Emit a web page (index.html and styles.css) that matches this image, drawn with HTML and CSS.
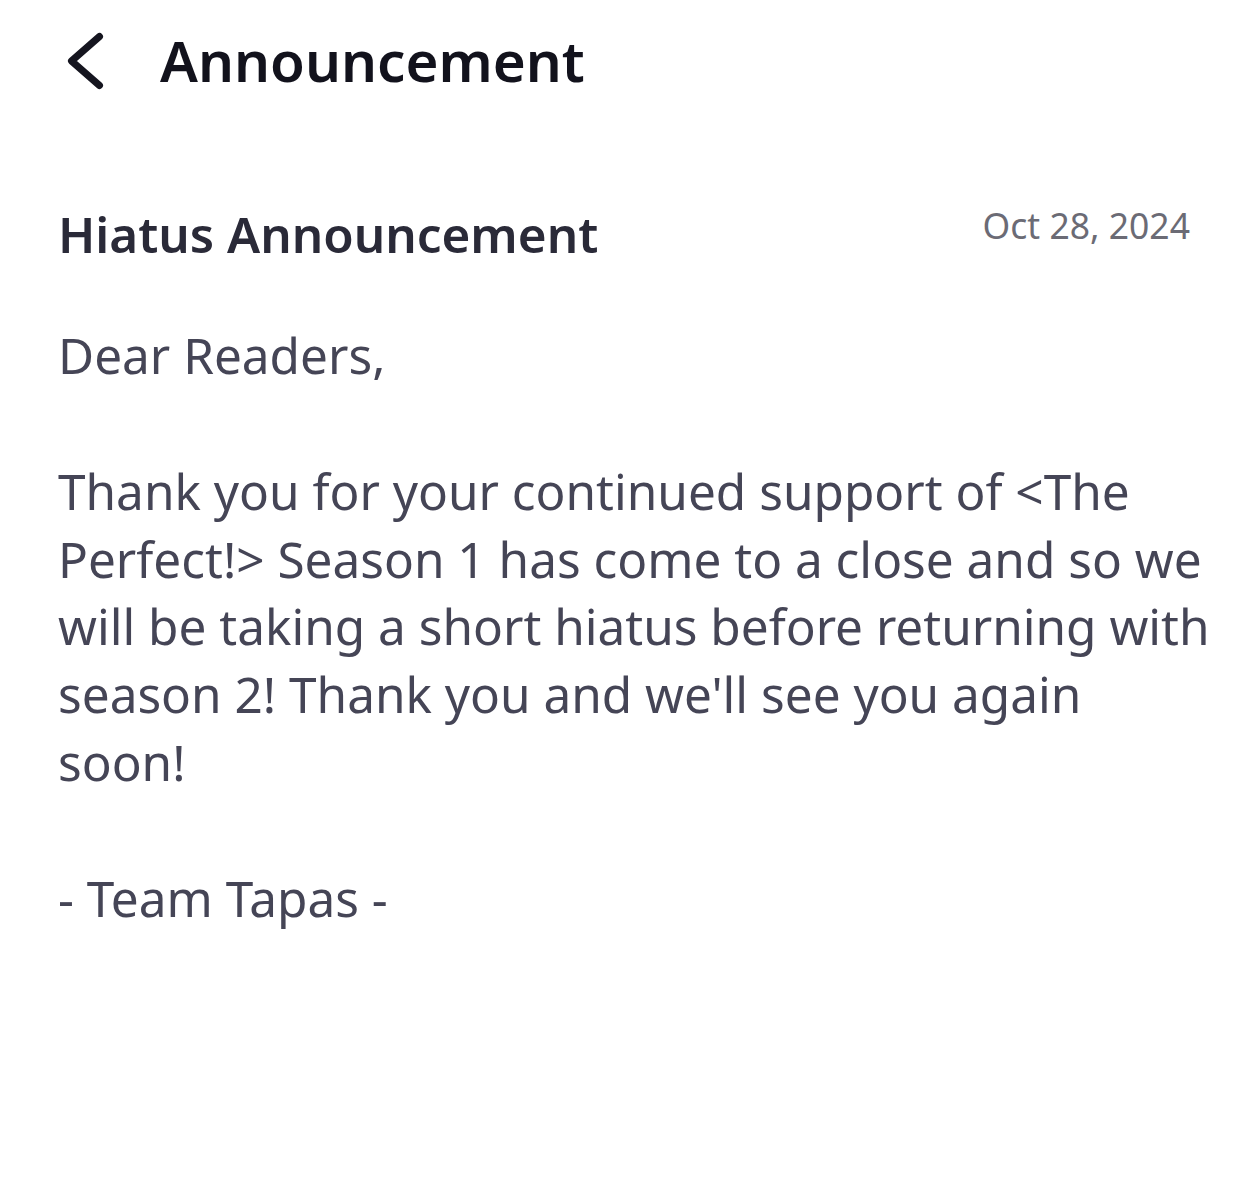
FILE: index.html
```html
<!DOCTYPE html>
<html lang="en">
<head>
<meta charset="utf-8">
<title>Announcement</title>
<link rel="stylesheet" href="styles.css">
</head>
<body>
<header class="topbar">
  <button class="back" aria-label="Back">
    <svg width="44" height="60" viewBox="0 0 44 60" aria-hidden="true">
      <path d="M35.5 5.5 L7.5 30 L35.5 54.5" fill="none" stroke="#15151f" stroke-width="7" stroke-linecap="round" stroke-linejoin="round"/>
    </svg>
  </button>
  <h1 class="topbar-title">Announcement</h1>
</header>
<main class="notice">
  <div class="notice-head">
    <h2 class="notice-title">Hiatus Announcement</h2>
    <span class="notice-date">Oct 28, 2024</span>
  </div>
  <div class="notice-body">
    <p>Dear Readers,</p>
    <p>&nbsp;</p>
    <p>Thank you for your continued support of &lt;The Perfect!&gt; Season 1 has come to a close and so we will be taking a short hiatus before returning with season 2! Thank you and we'll see you again soon!</p>
    <p>&nbsp;</p>
    <p>- Team Tapas -</p>
  </div>
</main>
</body>
</html>
```
FILE: styles.css
```css
* { box-sizing: border-box; }
html, body { margin: 0; padding: 0; background: #ffffff; }
body { font-family: "Noto Sans", "Open Sans", sans-serif; }

.topbar {
  display: flex;
  align-items: center;
  height: 122px;
  padding-left: 64px;
}
.back {
  display: flex;
  align-items: center;
  background: none;
  border: 0;
  padding: 0;
  width: 96px;
  height: 60px;
  cursor: pointer;
}
.back svg { display: block; }
.topbar-title {
  margin: 0;
  font-size: 56.5px;
  font-weight: 600;
  color: #12121c;
  line-height: 1;
}

.notice { padding: 80px 58px 0 58px; }
.notice-head {
  display: flex;
  justify-content: space-between;
  align-items: flex-start;
}
.notice-title {
  margin: 0;
  font-size: 49.4px;
  font-weight: 600;
  line-height: 1.3;
  color: #2a2a38;
}
.notice-date {
  font-size: 35.5px;
  color: #6b6b75;
  line-height: 1.3;
  padding-right: 12px;
}
.notice-body {
  margin-top: 56px;
  margin-right: -14px;
  font-size: 49.5px;
  line-height: 67.8px;
  color: #454556;
}
.notice-body p { margin: 0; }
```
